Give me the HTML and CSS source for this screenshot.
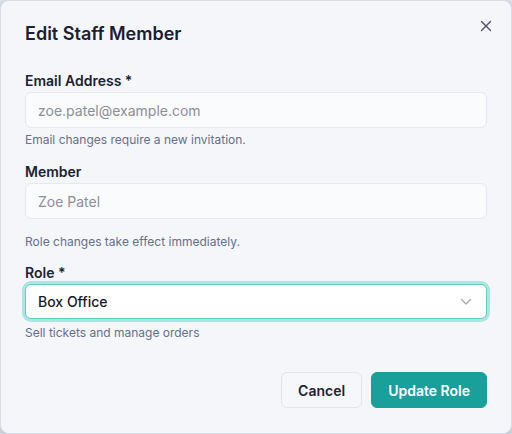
FILE: index.html
```html
<!DOCTYPE html>
<html>
<head>
<meta charset="utf-8">
<link rel="stylesheet" href="styles.css">
</head>
<body>
<div class="dialog">
  <button class="close" aria-label="Close">
    <svg width="12" height="12" viewBox="0 0 12 12"><path d="M1.5 1.5 L10.5 10.5 M10.5 1.5 L1.5 10.5" stroke="#4b5160" stroke-width="1.4" stroke-linecap="round" fill="none"/></svg>
  </button>
  <h2 class="title">Edit Staff Member</h2>
  <div class="form">
    <div class="field">
      <label class="label">Email Address *</label>
      <div class="input"><span class="placeholder">zoe.patel@example.com</span></div>
      <p class="help help-tight">Email changes require a new invitation.</p>
    </div>
    <div class="field">
      <label class="label">Member</label>
      <div class="input"><span class="placeholder">Zoe Patel</span></div>
    </div>
    <p class="help help-note">Role changes take effect immediately.</p>
    <div class="field">
      <label class="label">Role *</label>
      <div class="select">
        <span class="value">Box Office</span>
        <svg class="chev" width="12" height="8" viewBox="0 0 12 8"><path d="M1.5 1.5 L6 6 L10.5 1.5" stroke="#a2a7b2" stroke-width="1.3" fill="none" stroke-linecap="round" stroke-linejoin="round"/></svg>
      </div>
      <p class="help help-select">Sell tickets and manage orders</p>
    </div>
  </div>
  <div class="footer">
    <button class="btn btn-secondary">Cancel</button>
    <button class="btn btn-primary">Update Role</button>
  </div>
</div>
</body>
</html>
```
FILE: styles.css
```css
* { box-sizing: border-box; }
html, body { margin: 0; padding: 0; }
body {
  background: #dfe3ea;
  font-family: Inter, "Noto Sans", "Liberation Sans", sans-serif;
  width: 512px;
  height: 434px;
  overflow: hidden;
}
.dialog {
  position: relative;
  width: 512px;
  height: 434px;
  background: #f5f6fa;
  border: 1px solid #d9dee7;
  border-radius: 9px;
  padding: 19px 24px 24px 24px;
  box-shadow: 0 2px 6px rgba(40, 50, 70, 0.25);
}
.close {
  position: absolute;
  top: 18px;
  right: 18px;
  width: 14px;
  height: 14px;
  padding: 0;
  border: 0;
  background: transparent;
  display: flex;
  align-items: center;
  justify-content: center;
}
.title {
  margin: 0 0 23px 0;
  font-size: 18px;
  line-height: 28px;
  font-weight: 600;
  color: #1a2030;
}
.form {
  display: flex;
  flex-direction: column;
  gap: 14px;
}
.field {
  display: flex;
  flex-direction: column;
}
.label {
  font-size: 14px;
  line-height: 20px;
  font-weight: 600;
  color: #1c2230;
  margin-bottom: 1px;
}
.input {
  height: 36px;
  background: #fafbfd;
  border: 1px solid #e5e8ee;
  border-radius: 6px;
  display: flex;
  align-items: center;
  padding: 0 12px;
}
.placeholder {
  font-size: 14px;
  color: #8a8f9a;
}
.help {
  margin: 0;
  font-size: 12px;
  line-height: 16px;
  color: #64708a;
}
.help-tight { margin-top: 4px; }
.help-note { margin-top: 1px; margin-bottom: -1px; }
.help-select { margin-top: 6px; }
.select {
  height: 35px;
  background: #ffffff;
  border: 1.5px solid #5ccfc6;
  border-radius: 6px;
  box-shadow: 0 0 0 3px #abe6e1;
  display: flex;
  align-items: center;
  justify-content: space-between;
  padding: 0 14px 0 12px;
}
.value {
  font-size: 14px;
  font-weight: 500;
  color: #141a28;
}
.chev { display: block; }
.footer {
  margin-top: 31px;
  display: flex;
  justify-content: flex-end;
  gap: 9px;
}
.btn {
  height: 36px;
  border-radius: 6px;
  font-family: inherit;
  font-size: 14px;
  font-weight: 600;
  padding: 0 16px;
  cursor: pointer;
}
.btn-secondary {
  background: #f6f7fa;
  border: 1px solid #e1e4ea;
  color: #1c2230;
}
.btn-primary {
  background: #1aa09b;
  border: 1px solid #1aa09b;
  color: #ffffff;
  padding: 0 16px;
}
```
